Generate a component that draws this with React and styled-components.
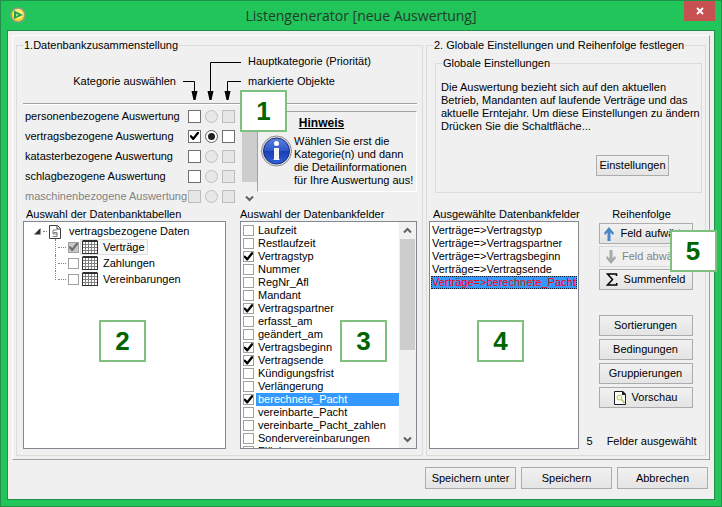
import React, { useState } from 'react';
import styled, { createGlobalStyle } from 'styled-components';

const GlobalStyle = createGlobalStyle`
  * {
    box-sizing: border-box;
  }

  body {
    margin: 0;
    background: #f0f0f0;
    color: #000;
    font-family: "Liberation Sans", Arial, sans-serif;
    font-size: 11px;
    line-height: 13px;
  }

  button,
  input {
    font: inherit;
    margin: 0;
  }
`;

const Window = styled.div`
  display: flex;
  flex-direction: column;
  min-height: 100vh;
  padding: 0 6px 6px;
  border: 1px solid #1f9148;
  background: #22c55a;
`;

const TitleBar = styled.header`
  position: relative;
  display: flex;
  align-items: center;
  justify-content: center;
  height: 29px;
`;

const Title = styled.h1`
  margin: 0;
  color: #1f3d2a;
  font-family: "Open Sans", "Noto Sans", sans-serif;
  font-size: 14px;
  font-weight: 400;
  line-height: 20px;
`;

const TitleIcon = styled.span`
  position: absolute;
  top: 6px;
  left: 3px;
  height: 16px;
`;

const CloseButton = styled.button`
  position: absolute;
  top: 0;
  right: 0;
  display: flex;
  align-items: center;
  justify-content: center;
  width: 31px;
  height: 20px;
  padding: 0;
  border: 0;
  background: #c75050;
`;

const Client = styled.main`
  flex: 1;
  padding: 4px;
  border: 1px solid #1f9148;
  background: #f0f0f0;
`;

const Panel = styled.div`
  display: grid;
  grid-template-columns: 407fr 280fr;
  gap: 3px;
  padding: 2px 3px 3px;
  border: 1px solid;
  border-color: #fff #a0a0a0 #a0a0a0 #fff;
`;

const Group = styled.fieldset`
  min-width: 0;
  margin: 0;
  padding: ${({ $padding }) => $padding};
  border: 1px solid #dcdcdc;
`;

const Legend = styled.legend`
  margin-left: ${({ $indent }) => $indent || 0}px;
  padding: 0;
  line-height: 14px;
`;

const CategoryHead = styled.div`
  display: flex;
  height: 52px;
  border-bottom: 1px solid #a0a0a0;
  box-shadow: 0 1px #fff;
`;

const HeadLabel = styled.span`
  width: 153px;
  padding-top: 23px;
  text-align: right;
`;

const HeadArrows = styled.svg`
  margin: 0 7px;
`;

const HeadNotes = styled.div`
  display: flex;
  flex-direction: column;
  gap: 7px;
  padding-top: 3px;
`;

const CategoryArea = styled.div`
  position: relative;
  display: flex;
  height: 103px;
  padding-top: 2px;
`;

const CategoryRow = styled.div`
  display: flex;
  align-items: center;
  gap: 4px;
  width: 218px;
  height: 20px;
  padding-left: 2px;
  color: ${({ $disabled }) => ($disabled ? '#838383' : '#000')};

  label {
    width: 159px;
    white-space: nowrap;
  }
`;

const Check = styled.input.attrs({ type: 'checkbox' })`
  flex: none;
  display: grid;
  place-content: center;
  width: ${({ $size }) => $size || 11}px;
  height: ${({ $size }) => $size || 11}px;
  appearance: none;
  border: 1px solid ${({ $size }) => ($size ? '#707070' : '#a0a0a0')};
  background: #fff;

  &:disabled {
    border-color: #bcbcbc;
    background: #e6e6e6;
  }

  &:checked::before {
    content: "";
    width: 9px;
    height: 9px;
    background: #000;
    clip-path: polygon(0 42%, 12% 38%, 36% 62%, 84% 0, 100% 6%, 100% 22%, 42% 94%, 30% 94%, 0 62%);
  }

  &:checked:disabled {
    border-color: #a0a0a0;
    background: #c8c8c8;
  }

  &:checked:disabled::before {
    background: #707070;
  }
`;

const Radio = styled.input.attrs({ type: 'radio' })`
  flex: none;
  display: grid;
  place-content: center;
  width: 13px;
  height: 13px;
  appearance: none;
  border: 1px solid #606060;
  border-radius: 50%;
  background: #fff;

  &:disabled {
    border-color: #c0c0c0;
    background: #e8e8e8;
  }

  &:checked::before {
    content: "";
    width: 7px;
    height: 7px;
    border-radius: 50%;
    background: #202020;
  }
`;

const ScrollBar = styled.div`
  flex: none;
  display: flex;
  flex-direction: column;
  align-items: center;
  justify-content: space-between;
  width: ${({ $width }) => $width || 16}px;
  background: #f0f0f0;
`;

const ScrollThumb = styled.div`
  width: 15px;
  height: ${({ $height }) => $height}px;
  margin-bottom: auto;
  background: #cdcdcd;
`;

const ScrollButton = styled.button`
  display: flex;
  align-items: center;
  justify-content: center;
  width: 15px;
  height: 17px;
  padding: 0;
  border: 0;
  background: none;
`;

const Hint = styled.aside`
  flex: 1;
  height: 81px;
  margin-top: 5px;
  padding: 4px 0 0 3px;
  border: 1px solid;
  border-color: #a0a0a0 #fff #fff #a0a0a0;

  h2 {
    margin: 0 0 5px;
    padding-right: 34px;
    font-size: 12px;
    line-height: 14px;
    text-align: center;
    text-decoration: underline;
  }

  div {
    display: flex;
    gap: 2px;
  }

  p {
    margin: 0;
    white-space: pre-line;
  }
`;

const ListColumns = styled.div`
  display: grid;
  grid-template-columns: ${({ $columns }) => $columns};
  column-gap: ${({ $gap }) => $gap || 0}px;
`;

const ListColumn = styled.section`
  min-width: 0;

  h3 {
    margin: 0;
    padding-left: ${({ $indent }) => $indent}px;
    font-size: 11px;
    font-weight: 400;
    line-height: 14px;
    white-space: nowrap;
  }
`;

const ListBox = styled.div`
  position: relative;
  display: flex;
  height: 228px;
  border: 1px solid #828790;
  background: #fff;
`;

const Tree = styled.ul`
  flex: 1;
  margin: 0;
  padding: 2px 0 0 10px;
  list-style: none;

  ul {
    margin: 0 0 0 21px;
    padding: 0;
    list-style: none;
  }
`;

const TreeRoot = styled.div`
  display: flex;
  align-items: center;
  height: 15px;

  span {
    margin-left: 8px;
  }
`;

const TreeDash = styled.i`
  width: ${({ $width }) => $width}px;
  margin: 0 2px;
  border-top: 1px dotted #808080;
`;

const TreeItem = styled.li`
  display: flex;
  align-items: center;
  height: 16px;
  border-left: 1px dotted #808080;

  &:last-child {
    height: 9px;
    align-items: end;
  }

  &:last-child > input {
    margin-bottom: -5px;
  }

  &:last-child > label {
    margin-bottom: -7px;
  }

  label {
    display: flex;
    align-items: center;
    gap: 5px;
    height: 16px;
    margin-left: 1px;
    padding: 0 2px 0 1px;
    border: 1px solid ${({ $selected }) => ($selected ? '#dedede' : 'transparent')};
    background: ${({ $selected }) => ($selected ? '#f7f7f7' : 'none')};
  }
`;

const FieldList = styled.ul`
  flex: 1;
  min-width: 0;
  margin: 0;
  padding: 2px 0 0 2px;
  overflow: hidden;
  list-style: none;
`;

const FieldItem = styled.li`
  display: flex;
  align-items: center;
  gap: 2px;
  height: 13px;

  label {
    flex: 1;
    padding-left: 2px;
    color: ${({ $selected }) => ($selected ? '#fff' : '#000')};
    background: ${({ $selected }) => ($selected ? '#3399ff' : 'none')};
    white-space: nowrap;
  }
`;

const ChosenItem = styled.li`
  height: 13px;
  padding-left: 1px;
  white-space: nowrap;
  color: ${({ $selected }) => ($selected ? '#ff0000' : '#000')};
  background: ${({ $selected }) => ($selected ? '#3399ff' : 'none')};
  outline: ${({ $selected }) => ($selected ? '1px dotted #102040' : 'none')};
  outline-offset: -1px;
`;

const ChosenList = styled(FieldList)`
  padding: 2px 1px 0;
`;

const GlobalGroup = styled(Group)`
  margin: 4px 0 14px 6px;

  p {
    margin: 11px 0 22px;
    white-space: pre-line;
  }
`;

const Button = styled.button`
  display: flex;
  align-items: center;
  justify-content: center;
  gap: ${({ $gap }) => $gap || 6}px;
  width: ${({ $width }) => $width || 94}px;
  height: ${({ $height }) => $height || 21}px;
  margin: 0;
  padding: 0;
  border: 1px solid #acacac;
  background: linear-gradient(#f1f1f1, #e4e4e4);
  color: #000;
  white-space: nowrap;

  &:disabled {
    border-color: #d9d9d9;
    background: #f0f0f0;
    color: #838383;
  }
`;

const SettingsRow = styled.div`
  display: flex;
  justify-content: flex-end;
  padding-right: 32px;
`;

const OrderColumn = styled.section`
  display: flex;
  flex-direction: column;
  align-items: center;
  min-width: 0;
  padding-left: 10px;

  h3 {
    margin: 0 0 2px;
    padding-right: 8px;
    font-size: 11px;
    font-weight: 400;
    line-height: 14px;
  }
`;

const ButtonStack = styled.div`
  position: relative;
  display: flex;
  flex-direction: column;
  gap: ${({ $gap }) => $gap}px;
  margin-bottom: ${({ $after }) => $after}px;
`;

const FieldCount = styled.p`
  display: flex;
  gap: 14px;
  margin: auto 0 1px;
  padding-right: 8px;
  white-space: nowrap;
`;

const Footer = styled.footer`
  display: flex;
  justify-content: flex-end;
  gap: 5px;
  padding: 7px 2px 6px;
`;

const Badge = styled.span`
  position: absolute;
  top: ${({ $top }) => $top}px;
  left: ${({ $left }) => $left}px;
  z-index: 1;
  display: flex;
  align-items: center;
  justify-content: center;
  width: 47px;
  height: 42px;
  border: 2px solid #7fc07f;
  background: #fff;
  color: #006400;
  font-size: 26px;
  font-weight: 700;
  line-height: 30px;
`;

const PlayIcon = () => (
  <svg width="16" height="16" viewBox="0 0 16 16">
    <circle cx="8" cy="8" r="7" fill="#f0dc1c" stroke="#8f9a8c" strokeWidth="1.6" />
    <circle cx="8" cy="7" r="5" fill="#f8f07a" />
    <path d="M4 3.500l9 4.500-9 4z" fill="#1ea04c" />
    <path d="M6 6.500l3 1.500-3 1.500z" fill="#a8e098" />
  </svg>
);

const CloseIcon = () => (
  <svg width="8" height="8" viewBox="0 0 8 8">
    <path d="M1 1l6 6M7 1L1 7" stroke="#fff" strokeWidth="1.8" />
  </svg>
);

const Chevron = ({ up }) => (
  <svg width="9" height="7" viewBox="0 0 9 7">
    <path
      d={up ? 'M1 5.500L4.500 2 8 5.500' : 'M1 1.500L4.500 5 8 1.500'}
      fill="none"
      stroke="#606060"
      strokeWidth="2"
    />
  </svg>
);

const InfoIcon = () => (
  <svg width="31" height="32" viewBox="0 0 31 32">
    <defs>
      <linearGradient id="infoBlue" x1="0" y1="0" x2="0" y2="1">
        <stop offset="0" stopColor="#5f82dc" />
        <stop offset="0.5" stopColor="#2a55c8" />
        <stop offset="0.52" stopColor="#1a3fb4" />
        <stop offset="1" stopColor="#2f62dc" />
      </linearGradient>
    </defs>
    <circle cx="15.500" cy="16" r="15" fill="#dadada" stroke="#8e8e8e" />
    <circle cx="15.500" cy="16" r="13" fill="url(#infoBlue)" stroke="#1b2f7c" />
    <circle cx="15.500" cy="8.500" r="2.500" fill="#fff" />
    <path d="M13 13h5v11l1 1h-7l1-1z" fill="#f4f4f4" />
  </svg>
);

const ParagraphIcon = () => (
  <svg width="12" height="14" viewBox="0 0 12 14">
    <path d="M.5.500h8l3 3v10H.5z" fill="#fff" stroke="#404040" />
    <path d="M8 .5V4h3.500" fill="none" stroke="#404040" />
    <path d="M8 5H4v2.500h4V10M4 7.500V9h4M8 9v2.500H3.500" fill="none" stroke="#808080" />
  </svg>
);

const TableIcon = () => (
  <svg width="16" height="14" viewBox="0 0 16 14">
    <path d="M0 1h16v13H0z" fill="#808080" />
    <path d="M0 1l1-1h14l1 1v1H0zM0 13h16v1H0zM0 2h1v12H0zM15 2h1v12h-1z" fill="#303030" />
    <path
      d="M1 2h2v2H1zM4 2h2v2H4zM7 2h2v2H7zM10 2h2v2h-2zM13 2h2v2h-2zM1 5h2v2H1zM4 5h2v2H4zM7 5h2v2H7zM10 5h2v2h-2zM13 5h2v2h-2zM1 8h2v2H1zM4 8h2v2H4zM7 8h2v2H7zM10 8h2v2h-2zM13 8h2v2h-2zM1 11h2v2H1zM4 11h2v2H4zM7 11h2v2H7zM10 11h2v2h-2zM13 11h2v2h-2z"
      fill="#fff"
    />
  </svg>
);

const ArrowIcon = ({ down }) => (
  <svg width="10" height="14" viewBox="0 0 10 14">
    <path
      d={down ? 'M3.500 0h3v8.500L9 6l1 2-5 6-5-6 1-2 2.500 2.500z' : 'M3.500 14h3V5.500L9 8l1-2-5-6-5 6 1 2 2.500-2.500z'}
      fill={down ? '#a8a8a8' : '#4a86c5'}
    />
  </svg>
);

const SumIcon = () => (
  <svg width="12" height="13" viewBox="0 0 12 13">
    <path d="M10.500 3V1H1.500l5 5.500-5 5.500h9.200v-2" fill="none" stroke="#000" strokeWidth="1.500" />
  </svg>
);

const PreviewIcon = () => (
  <svg width="12" height="14" viewBox="0 0 12 14">
    <path d="M.5.500h8l3 3v10H.5z" fill="#fff" stroke="#202020" />
    <path d="M8 0h1l3 3v1H8z" fill="#202020" />
    <circle cx="5.500" cy="6.500" r="2.500" fill="#f2f8dc" stroke="#a9c65a" />
    <path d="M7.500 8.500l3 3.500" stroke="#a9c65a" strokeWidth="1.600" />
  </svg>
);

const categories = [
  { name: 'personenbezogene Auswertung' },
  { name: 'vertragsbezogene Auswertung', active: true },
  { name: 'katasterbezogene Auswertung' },
  { name: 'schlagbezogene Auswertung' },
  { name: 'maschinenbezogene Auswertung', disabled: true }
];

const fields = [
  'Laufzeit',
  'Restlaufzeit',
  'Vertragstyp',
  'Nummer',
  'RegNr_Afl',
  'Mandant',
  'Vertragspartner',
  'erfasst_am',
  'geändert_am',
  'Vertragsbeginn',
  'Vertragsende',
  'Kündigungsfrist',
  'Verlängerung',
  'berechnete_Pacht',
  'vereinbarte_Pacht',
  'vereinbarte_Pacht_zahlen',
  'Sondervereinbarungen',
  'Flächennutzung'
];

const tables = ['Verträge', 'Zahlungen', 'Vereinbarungen'];

const selectedField = 'berechnete_Pacht';

const App = () => {
  const [chosen, setChosen] = useState([
    'Vertragstyp',
    'Vertragspartner',
    'Vertragsbeginn',
    'Vertragsende',
    'berechnete_Pacht'
  ]);

  const toggleField = (field) => {
    setChosen(chosen.includes(field) ? chosen.filter((f) => f !== field) : [...chosen, field]);
  };

  return (
    <Window>
      <GlobalStyle />
      <TitleBar>
        <TitleIcon><PlayIcon /></TitleIcon>
        <Title>Listengenerator [neue Auswertung]</Title>
        <CloseButton aria-label="Schließen"><CloseIcon /></CloseButton>
      </TitleBar>
      <Client>
        <Panel>
          <Group $padding="0 5px 6px 6px">
            <Legend $indent={1}>1.Datenbankzusammenstellung</Legend>
            <CategoryHead>
              <HeadLabel>Kategorie auswählen</HeadLabel>
              <HeadArrows width="58" height="51" viewBox="0 0 58 51">
                <path d="M0 29.500h11.500V42M58 10.500H27.500V42M58 29.500H44.500V42" fill="none" stroke="#000" />
                <path d="M8.500 39h6l-2 9h-2zM24.500 39h6l-2 9h-2zM41.500 39h6l-2 9h-2z" />
              </HeadArrows>
              <HeadNotes>
                <span>Hauptkategorie (Priorität)</span>
                <span>markierte Objekte</span>
              </HeadNotes>
            </CategoryHead>
            <CategoryArea>
              <div>
                {categories.map(({ name, active, disabled }, i) => (
                  <CategoryRow key={name} $disabled={disabled}>
                    <label htmlFor={`category-${i}`}>{name}</label>
                    <Check id={`category-${i}`} $size={13} defaultChecked={active} disabled={disabled} />
                    <Radio name="main" aria-label={`Hauptkategorie ${name}`} defaultChecked={active} disabled={!active} />
                    <Check $size={13} aria-label={`markierte Objekte ${name}`} disabled={!active} />
                  </CategoryRow>
                ))}
              </div>
              <ScrollBar>
                <ScrollThumb $height={76} />
                <ScrollButton aria-label="Nach unten"><Chevron /></ScrollButton>
              </ScrollBar>
              <Hint>
                <h2>Hinweis</h2>
                <div>
                  <InfoIcon />
                  <p>{'Wählen Sie erst die\nKategorie(n) und dann\ndie Detailinformationen\nfür Ihre Auswertung aus!'}</p>
                </div>
              </Hint>
              <Badge $top={-14} $left={217}>1</Badge>
            </CategoryArea>
            <ListColumns $columns="203fr 177fr" $gap={14}>
              <ListColumn $indent={3}>
                <h3>Auswahl der Datenbanktabellen</h3>
                <ListBox>
                  <Tree>
                    <li>
                      <TreeRoot>
                        <svg width="7" height="7" viewBox="0 0 7 7"><path d="M6.500 0v6.500H0z" fill="#303030" /></svg>
                        <TreeDash $width={4} />
                        <ParagraphIcon />
                        <span>vertragsbezogene Daten</span>
                      </TreeRoot>
                      <ul>
                        {tables.map((table, i) => (
                          <TreeItem key={table} $selected={i === 0}>
                            <TreeDash $width={8} />
                            <Check id={`table-${i}`} defaultChecked={i === 0} disabled={i === 0} />
                            <label htmlFor={`table-${i}`}><TableIcon />{table}</label>
                          </TreeItem>
                        ))}
                      </ul>
                    </li>
                  </Tree>
                  <Badge $top={98} $left={75}>2</Badge>
                </ListBox>
              </ListColumn>
              <ListColumn $indent={0}>
                <h3>Auswahl der Datenbankfelder</h3>
                <ListBox>
                  <FieldList>
                    {fields.map((field) => (
                      <FieldItem key={field} $selected={field === selectedField}>
                        <Check
                          id={field}
                          checked={chosen.includes(field)}
                          onChange={() => toggleField(field)}
                        />
                        <label htmlFor={field}>{field}</label>
                      </FieldItem>
                    ))}
                  </FieldList>
                  <ScrollBar $width={17}>
                    <ScrollButton aria-label="Nach oben"><Chevron up /></ScrollButton>
                    <ScrollThumb $height={111} />
                    <ScrollButton aria-label="Nach unten"><Chevron /></ScrollButton>
                  </ScrollBar>
                  <Badge $top={98} $left={99}>3</Badge>
                </ListBox>
              </ListColumn>
            </ListColumns>
          </Group>

          <Group $padding="0 3px 6px 2px">
            <Legend $indent={5}>2. Globale Einstellungen und Reihenfolge festlegen</Legend>
            <GlobalGroup $padding="0 0 16px 5px">
              <Legend $indent={2}>Globale Einstellungen</Legend>
              <p>{'Die Auswertung bezieht sich auf den aktuellen\nBetrieb, Mandanten auf laufende Verträge und das\naktuelle Erntejahr. Um diese Einstellungen zu ändern\nDrücken Sie die Schaltfläche...'}</p>
              <SettingsRow>
                <Button $width={73}>Einstellungen</Button>
              </SettingsRow>
            </GlobalGroup>
            <ListColumns $columns="minmax(0, 150fr) minmax(0, 123fr)">
              <ListColumn $indent={4}>
                <h3>Ausgewählte Datenbankfelder</h3>
                <ListBox>
                  <ChosenList>
                    {chosen.map((field) => (
                      <ChosenItem key={field} $selected={field === selectedField}>
                        Verträge=&gt;{field}
                      </ChosenItem>
                    ))}
                  </ChosenList>
                  <Badge $top={98} $left={47}>4</Badge>
                </ListBox>
              </ListColumn>
              <OrderColumn>
                <h3>Reihenfolge</h3>
                <ButtonStack $gap={2} $after={25}>
                  <Button><ArrowIcon />Feld aufwärts</Button>
                  <Button disabled><ArrowIcon down />Feld abwärts</Button>
                  <Button><SumIcon />Summenfeld</Button>
                  <Badge $top={7} $left={71}>5</Badge>
                </ButtonStack>
                <ButtonStack $gap={3}>
                  <Button>Sortierungen</Button>
                  <Button>Bedingungen</Button>
                  <Button>Gruppierungen</Button>
                  <Button><PreviewIcon />Vorschau</Button>
                </ButtonStack>
                <FieldCount><span>{chosen.length}</span><span>Felder ausgewählt</span></FieldCount>
              </OrderColumn>
            </ListColumns>
          </Group>
        </Panel>
        <Footer>
          <Button $width={91} $height={22}>Speichern unter</Button>
          <Button $width={91} $height={22}>Speichern</Button>
          <Button $width={91} $height={22}>Abbrechen</Button>
        </Footer>
      </Client>
    </Window>
  );
};

export default App;
